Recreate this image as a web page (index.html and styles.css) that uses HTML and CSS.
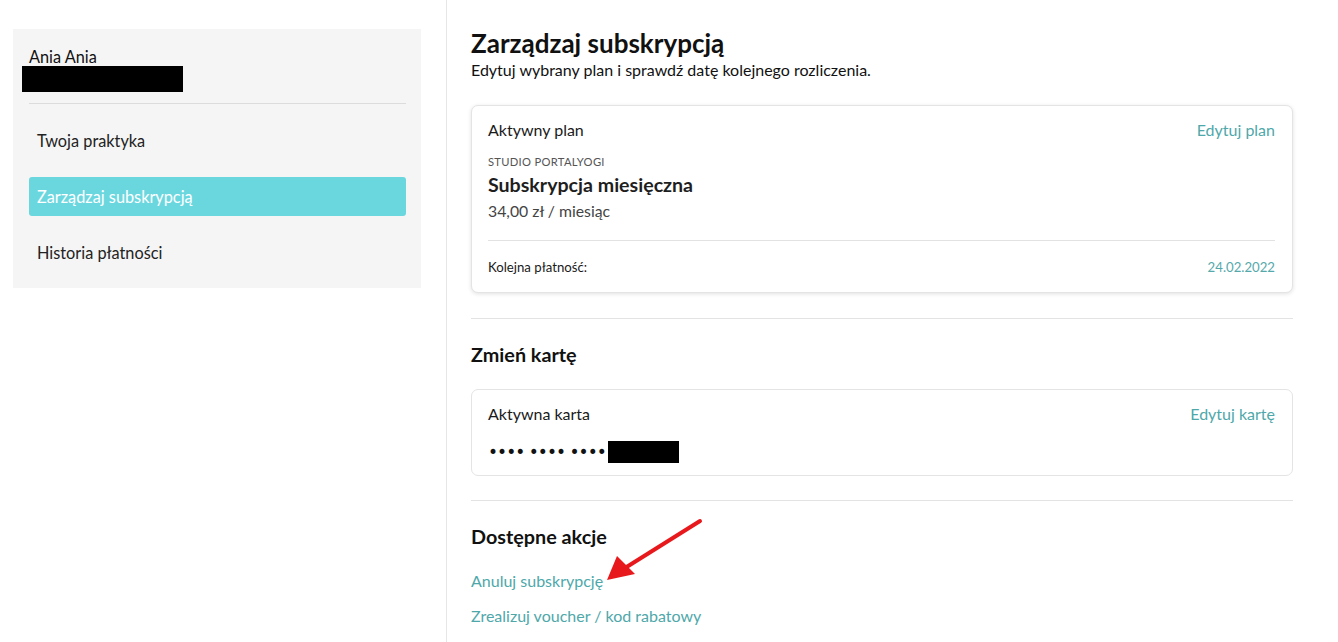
FILE: index.html
```html
<!DOCTYPE html>
<html lang="pl">
<head>
<meta charset="utf-8">
<link rel="stylesheet" href="styles.css">
</head>
<body>
<div class="page">
  <aside class="side">
    <div class="side-box">
      <div class="user">
        <div class="user-name">Ania Ania</div>
        <div class="redact redact-user"></div>
      </div>
      <nav class="nav">
        <a class="nav-item">Twoja praktyka</a>
        <a class="nav-item active">Zarządzaj subskrypcją</a>
        <a class="nav-item">Historia płatności</a>
      </nav>
    </div>
  </aside>
  <main class="main">
    <section class="sec sec-first">
      <h1 class="title">Zarządzaj subskrypcją</h1>
      <p class="subtitle">Edytuj wybrany plan i sprawdź datę kolejnego rozliczenia.</p>
      <div class="card card-plan">
        <div class="card-head">
          <span class="card-label">Aktywny plan</span>
          <a class="link">Edytuj plan</a>
        </div>
        <div class="studio">STUDIO PORTALYOGI</div>
        <div class="plan-name">Subskrypcja miesięczna</div>
        <div class="price">34,00 zł / miesiąc</div>
        <div class="card-foot">
          <span class="next">Kolejna płatność:</span>
          <span class="date">24.02.2022</span>
        </div>
      </div>
    </section>
    <section class="sec sec-second">
      <h2 class="h2">Zmień kartę</h2>
      <div class="card card-card">
        <div class="card-head">
          <span class="card-label">Aktywna karta</span>
          <a class="link">Edytuj kartę</a>
        </div>
        <div class="card-num"><span class="dots">•••• •••• ••••</span><span class="redact redact-card"></span></div>
      </div>
    </section>
    <section class="sec sec-last">
      <h2 class="h2">Dostępne akcje</h2>
      <a class="link action action-cancel">Anuluj subskrypcję</a>
      <a class="link action">Zrealizuj voucher / kod rabatowy</a>
      <svg class="arrow" width="110" height="75" viewBox="0 0 110 75">
        <line x1="102" y1="10" x2="27" y2="57" stroke="#e8191c" stroke-width="4" stroke-linecap="round"/>
        <polygon points="9,69 19,45 37,63" fill="#e8191c"/>
      </svg>
    </section>
  </main>
</div>
</body>
</html>
```

FILE: styles.css
```css
* { box-sizing: border-box; }
html, body { margin: 0; padding: 0; background: #fff; }
body {
  font-family: Lato, "Open Sans", "Liberation Sans", sans-serif;
  color: #1a1a1a;
}
.page {
  display: flex;
  min-height: 642px;
}
.side {
  width: 446px;
  padding: 29px 25px 0 13px;
  flex: none;
}
.side-box {
  background: #f5f5f5;
  padding: 18px 15px 16px 16px;
}
.user {
  border-bottom: 1px solid #dcdcdc;
  padding-bottom: 11px;
}
.user-name {
  font-size: 16.3px;
  line-height: 19px;
  color: #111;
}
.redact { display: block; background: #000; }
.redact-user {
  width: 161px;
  height: 26px;
  margin-left: -7px;
  margin-top: 0;
}
.nav {
  display: flex;
  flex-direction: column;
  gap: 17px;
  padding-top: 17px;
}
.nav-item {
  display: flex;
  align-items: center;
  height: 39px;
  padding-left: 8px;
  font-size: 16.3px;
  color: #222;
  border-radius: 3px;
}
.nav-item.active {
  background: #6ad7df;
  color: #fff;
}
.main {
  flex: 1;
  border-left: 1px solid #e6e6e6;
  padding: 0 45px 0 24px;
}
.sec {
  border-bottom: 1px solid #e3e3e3;
  padding: 23px 0 25px 0;
}
.sec-first { padding-top: 28px; }
.sec-second { padding-bottom: 24px; }
.sec-last { border-bottom: none; position: relative; padding-top: 23px; }
.title {
  margin: 0;
  font-size: 26px;
  line-height: 30px;
  font-weight: 700;
  color: #111;
}
.subtitle {
  margin: 2px 0 0;
  font-size: 16px;
  line-height: 20px;
  color: #111;
}
.card {
  background: #fff;
  border: 1px solid #e4e4e4;
  border-radius: 7px;
  padding: 0 17px 0 16px;
}
.card-plan {
  margin-top: 25px;
  box-shadow: 0 1px 4px rgba(0,0,0,0.12);
  padding-top: 14px;
}
.card-head {
  display: flex;
  justify-content: space-between;
  align-items: center;
  font-size: 16px;
  line-height: 20px;
}
.card-label { color: #1a1a1a; }
.link { color: #4ea8aa; text-decoration: none; }
.studio {
  margin-top: 15px;
  font-size: 11.2px;
  letter-spacing: 0.3px;
  line-height: 14px;
  color: #555;
}
.plan-name {
  margin-top: 4px;
  font-size: 19.6px;
  line-height: 24px;
  font-weight: 700;
  color: #1e1e1e;
}
.price {
  margin-top: 4px;
  font-size: 15.8px;
  line-height: 20px;
  color: #444;
}
.card-foot {
  margin-top: 19px;
  border-top: 1px solid #e2e2e2;
  display: flex;
  justify-content: space-between;
  align-items: center;
  height: 52px;
  font-size: 13.2px;
}
.next { color: #1a1a1a; }
.date { color: #55a9ab; }
.h2 {
  margin: 0;
  font-size: 19.8px;
  line-height: 24px;
  font-weight: 700;
  color: #111;
}
.card-card {
  margin-top: 23px;
  padding-top: 14px;
  padding-bottom: 12px;
}
.card-num {
  display: flex;
  align-items: center;
  margin-top: 17px;
  height: 22px;
}
.dots {
  font-size: 17px;
  letter-spacing: -0.95px;
  font-family: "DejaVu Sans", sans-serif;
  color: #111;
}
.redact-card {
  width: 71px;
  height: 22px;
  margin-left: 2px;
}
.action {
  display: block;
  font-size: 16px;
  line-height: 20px;
}
.action-cancel { margin-top: 23px; }
.action + .action { margin-top: 15px; }
.arrow {
  position: absolute;
  left: 127px;
  top: 10px;
}
```
